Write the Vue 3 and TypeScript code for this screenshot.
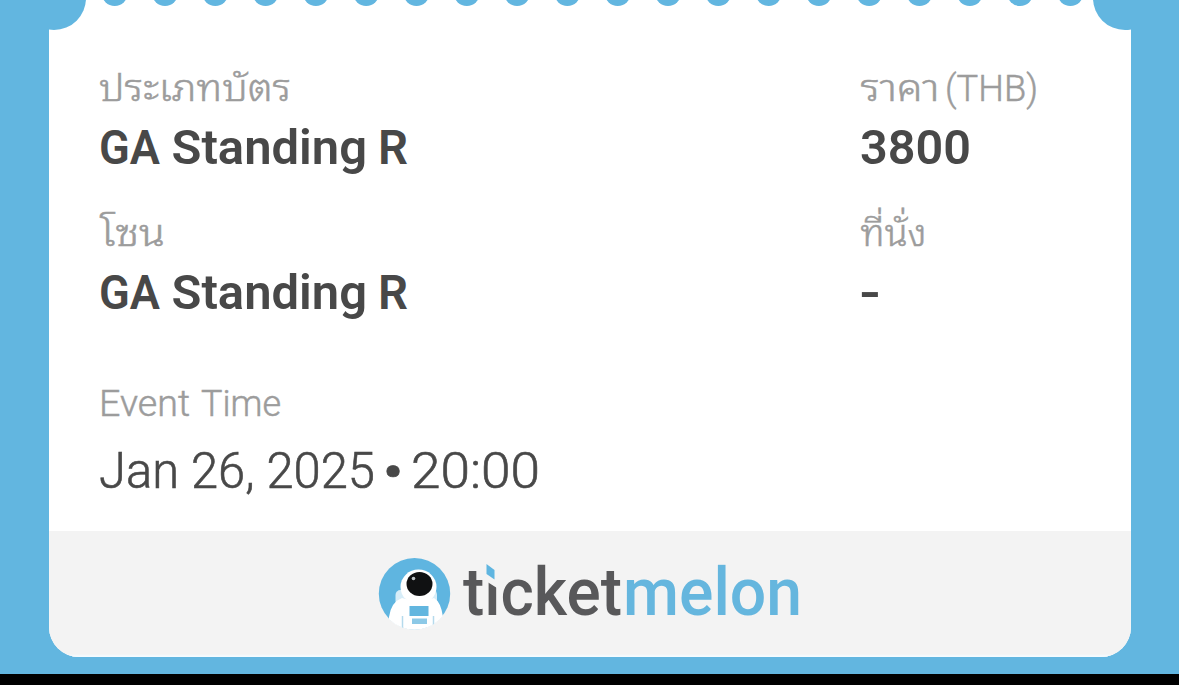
<script setup lang="ts">
interface Word {
  text: string
  x: number
  width: number
}

interface Field {
  label: Word[]
  value: Word[]
}

const dots: number[] = Array.from({ length: 20 }, (_, i) => 65.7 + i * 50.3)

const standing: Word[] = [
  { text: 'GA', x: -1, width: 61 },
  { text: 'Standing', x: 71.5, width: 195.5 },
  { text: 'R', x: 278, width: 30 },
]

const rows: Field[][] = [
  [
    { label: [{ text: 'ประเภทบัตร', x: -1, width: 192 }], value: standing },
    {
      label: [
        { text: 'ราคา', x: -0.5, width: 79 },
        { text: '(THB)', x: 84, width: 93 },
      ],
      value: [{ text: '3800', x: -1, width: 111 }],
    },
  ],
  [
    { label: [{ text: 'โซน', x: 0, width: 65 }], value: standing },
    {
      label: [{ text: 'ที่นั่ง', x: -0.5, width: 66 }],
      value: [{ text: '-', x: -2, width: 22 }],
    },
  ],
]
</script>

<template>
  <main class="page">
    <article class="ticket">
      <svg class="edge" width="1082" height="32" viewBox="0 0 1082 32" aria-hidden="true">
        <circle cx="5" cy="-2" r="32" />
        <circle cx="1076" cy="-2" r="32" />
        <circle v-for="x in dots" :key="x" :cx="x" cy="-7" r="13" />
      </svg>

      <section class="details">
        <div v-for="(row, r) in rows" :key="r" class="row">
          <div v-for="(field, f) in row" :key="f" class="field">
            <svg class="label" width="320" height="62">
              <text v-for="word in field.label" :key="word.text" :x="word.x" y="45" :textLength="word.width" lengthAdjust="spacingAndGlyphs">{{ word.text }}</text>
            </svg>
            <svg class="value" width="320" height="83">
              <text v-for="word in field.value" :key="word.text" :x="word.x" y="46" :textLength="word.width" lengthAdjust="spacingAndGlyphs">{{ word.text }}</text>
            </svg>
          </div>
        </div>
        <div class="time">
          <svg class="label" width="320" height="62">
            <text x="-1" y="45" textLength="91" lengthAdjust="spacingAndGlyphs">Event</text>
            <text x="101" y="45" textLength="80" lengthAdjust="spacingAndGlyphs">Time</text>
          </svg>
          <svg class="date" width="460" height="80">
            <text x="-1" y="55" textLength="276" lengthAdjust="spacingAndGlyphs">Jan 26, 2025</text>
            <text class="bullet" x="283" y="57" textLength="20" lengthAdjust="spacingAndGlyphs">•</text>
            <text x="311" y="55" textLength="129" lengthAdjust="spacingAndGlyphs">20:00</text>
          </svg>
        </div>
      </section>

      <footer class="brand">
        <svg width="430" height="80" viewBox="375 553 430 80" role="img" aria-label="ticketmelon">
          <defs>
            <clipPath id="badge"><circle cx="414.5" cy="593.7" r="36" /></clipPath>
          </defs>
          <circle cx="414.5" cy="593.7" r="35.7" fill="#5fb5e0" />
          <g clip-path="url(#badge)">
            <rect x="395.5" y="590" width="10" height="16" rx="5" fill="#d7edf8" />
            <rect x="428" y="590" width="9" height="16" rx="4.5" fill="#d7edf8" />
            <path d="M386 634L389 617Q391 602 402 598Q418 604 434 598Q441 602 443 617L445 634Z" fill="#fff" />
            <ellipse cx="418.5" cy="587" rx="18" ry="17.5" fill="#fff" />
            <path d="M402.5 616V628M433.5 616V628" stroke="#b5daec" stroke-width="1.5" />
            <rect x="409.5" y="606" width="19" height="10" fill="#62b6df" />
            <rect x="412" y="618.5" width="15" height="5.5" fill="#8cc9e7" />
          </g>
          <ellipse cx="419.5" cy="584" rx="13" ry="12" fill="#101112" />
          <circle cx="413.5" cy="578.5" r="1.8" fill="#bfc4c7" />
          <text class="ticket-word" x="463" y="615" textLength="159" lengthAdjust="spacingAndGlyphs">ticket</text>
          <text class="melon-word" x="623" y="615" textLength="179" lengthAdjust="spacingAndGlyphs">melon</text>
          <path d="M484 560H497V588L485 580.5H484Z" fill="#f3f3f3" />
          <path d="M486.5 564L494.5 570V579.5L486.5 574Z" fill="#5fb5e0" />
        </svg>
      </footer>
    </article>
  </main>
</template>

<style>
body {
  margin: 0;
  background: #000;
}
</style>

<style scoped>
.page {
  box-sizing: border-box;
  width: 1179px;
  height: 674px;
  padding: 0 48.5px 17px;
  background: #62b6e0;
}

.ticket {
  display: flex;
  flex-direction: column;
  height: 657px;
  overflow: hidden;
  border-radius: 0 0 30px 30px;
  background: #fff;
}

.details {
  flex: none;
  box-sizing: border-box;
  height: 499px;
  padding: 24px 0 0 51.5px;
}

.row {
  display: grid;
  grid-template-columns: 761px 1fr;
  height: 145px;
}

.field,
.time {
  display: flex;
  flex-direction: column;
}

.time {
  margin-top: 25px;
}

svg {
  display: block;
  overflow: visible;
}

.edge {
  flex: none;
  overflow: hidden;
  fill: #62b6e0;
}

text {
  font-family: Roboto, "Noto Sans Thai Looped", "Noto Looped Thai", Loma, Waree, Garuda, Umpush, "Noto Serif Thai", "Liberation Sans", sans-serif;
}

.label text {
  font-size: 37px;
  font-weight: 300;
  fill: #9c9c9c;
  stroke: #9c9c9c;
  stroke-width: 0.5px;
}

.value text {
  font-size: 48.5px;
  font-weight: 570;
  fill: #484848;
}

.date text {
  font-size: 50px;
  font-weight: 300;
  fill: #484848;
  stroke: #484848;
  stroke-width: 0.6px;
}

.date .bullet {
  font-weight: 500;
}

.brand {
  display: flex;
  flex: 1;
  justify-content: center;
  padding-top: 22px;
  background: #f3f3f3;
  box-shadow: inset 0 -2px 2px #f4fbff;
}

.brand text {
  font-size: 66px;
  font-weight: 550;
}

.ticket-word {
  fill: #58585a;
}

.melon-word {
  fill: #65b6de;
}
</style>
